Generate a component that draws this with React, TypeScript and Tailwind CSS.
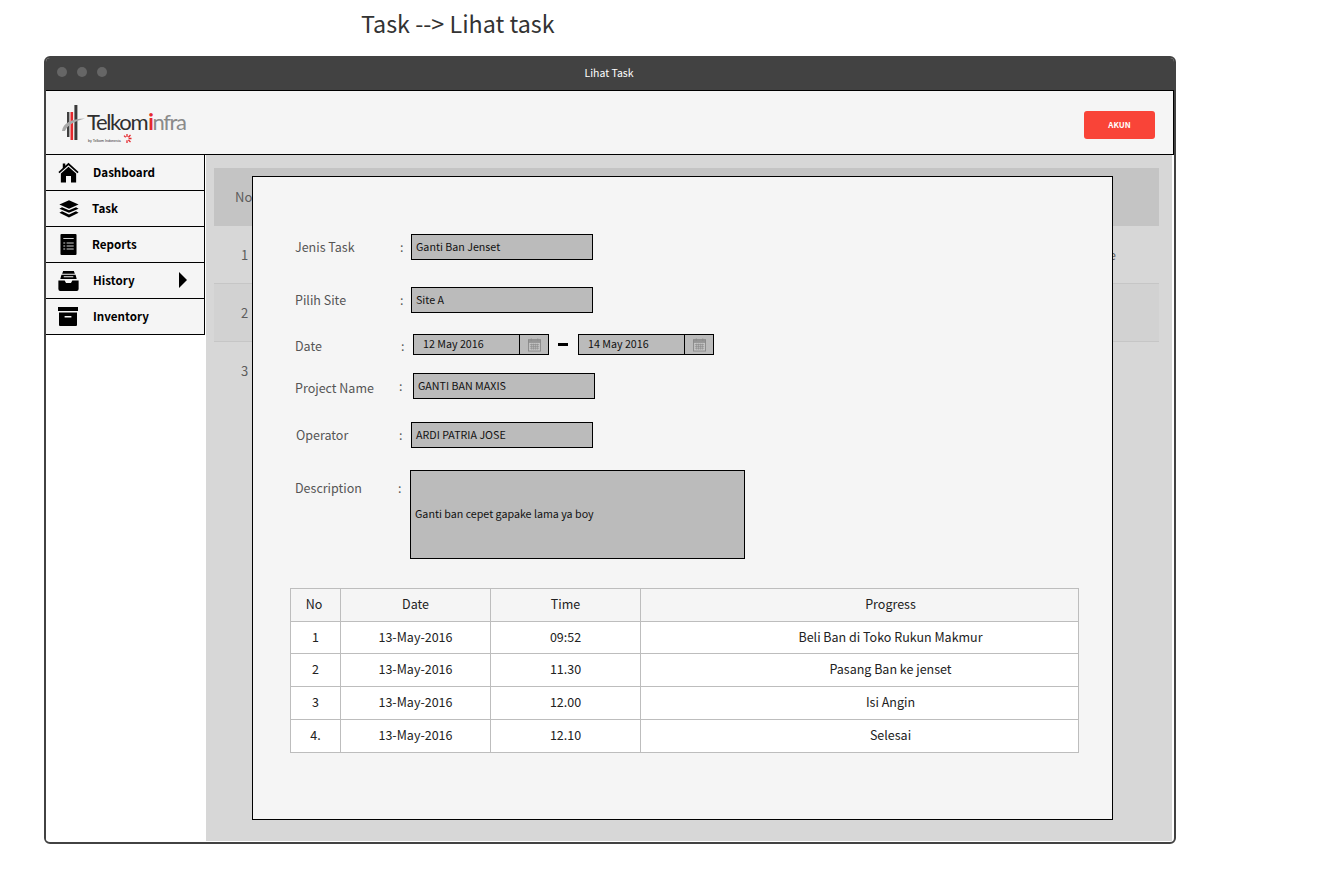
const fontStack = { fontFamily: '"Noto Sans CJK JP", "Noto Sans", sans-serif' };

function HomeIcon() {
  return (
    <svg width="21" height="21" viewBox="0 0 22 22" fill="#000">
      <path d="M11 .8 L21.6 10.6 L20.4 11.9 L11 3.4 L1.6 11.9 L.4 10.6 L5 6.4 V1.6 H7.6 V4 Z" />
      <path d="M11 5 L19 12 V21.4 H13.6 V14.6 H8.4 V21.4 H3 V12 Z" />
    </svg>
  );
}

function LayersIcon() {
  return (
    <svg width="20" height="18" viewBox="0 0 20 20" preserveAspectRatio="none" fill="#000">
      <path d="M10 .4 L19.6 5 L10 9.6 L.4 5 Z" />
      <path d="M3 8 L10 11.4 L17 8 L19.6 9.6 L10 14.2 L.4 9.6 Z" />
      <path d="M3 12.6 L10 16 L17 12.6 L19.6 14.2 L10 19.4 L.4 14.2 Z" />
    </svg>
  );
}

function ReportIcon() {
  return (
    <svg width="17" height="21" viewBox="0 0 18 21" preserveAspectRatio="none">
      <rect x=".5" y="0" width="17" height="21" rx="1" fill="#000" />
      <g fill="#cfcfcf">
        <rect x="3.5" y="4" width="11" height="1" />
        <rect x="3.5" y="8.5" width="2" height="1" />
        <rect x="7" y="8.5" width="7.5" height="1" />
        <rect x="3.5" y="11.5" width="2" height="1" />
        <rect x="7" y="11.5" width="7.5" height="1" />
        <rect x="3.5" y="14.5" width="2" height="1" />
        <rect x="7" y="14.5" width="7.5" height="1" />
      </g>
    </svg>
  );
}

function HistoryIcon() {
  return (
    <svg width="21" height="20" viewBox="0 0 22 21" preserveAspectRatio="none" fill="#000">
      <path d="M5.4 0 H16.6 L17.6 3 H4.4 Z" />
      <path d="M3.6 4 H18.4 L19.6 8.4 H2.4 Z M6 5.4 V6.6 H16 V5.4 Z" fillRule="evenodd" />
      <path d="M.4 10 H7 L8.4 12.6 H13.6 L15 10 H21.6 V19 A2 2 0 0 1 19.6 21 H2.4 A2 2 0 0 1 .4 19 Z" />
    </svg>
  );
}

function ArchiveIcon() {
  return (
    <svg width="20" height="19" viewBox="0 0 20 19" fill="#000">
      <rect x="0" y="0" width="20" height="4" />
      <path d="M1 5.4 H19 V18 A1 1 0 0 1 18 19 H2 A1 1 0 0 1 1 18 Z M6.6 9 V10.6 H13.4 V9 Z" fillRule="evenodd" />
    </svg>
  );
}

function CalendarIcon() {
  return (
    <svg width="13" height="14" viewBox="0 0 14 14" fill="none" stroke="#8a8a8a">
      <rect x=".5" y="1.5" width="13" height="12" fill="#c4c4c4" />
      <rect x=".5" y="1.5" width="13" height="2.5" fill="#9a9a9a" />
      <path d="M3.5 0 V2.5 M10.5 0 V2.5" />
      <path d="M2 6.5 H12 M2 8.5 H12 M2 10.5 H12 M4 5.5 V12 M6 5.5 V12 M8 5.5 V12 M10 5.5 V12" strokeWidth=".7" />
    </svg>
  );
}

function LogoMark() {
  return (
    <svg width="25" height="38" viewBox="0 0 25 38" className="mt-[2px]">
      <rect x="6" y="8" width="2.4" height="25" fill="#3f3f3f" />
      <rect x="9.5" y="8" width="2.6" height="28" fill="#e5282d" />
      <rect x="13.4" y="1" width="3" height="35" fill="#3a3a3a" />
      <path d="M1 27 C2 19 10 15 24 14.5 C15 17 7 20 4 27 Z" fill="#a8a8a8" />
    </svg>
  );
}

function TelkomBurst() {
  return (
    <svg width="11" height="11" viewBox="0 0 11 11" stroke="#e5282d" strokeWidth="1.3" className="-mt-[2px]">
      <path d="M6 1 V4 M9.5 2 L7.4 4.2 M10.5 5.5 H7.6 M9.5 9 L7.4 7 M6 10 V7.2 M3 2.6 L4.7 4.2" />
    </svg>
  );
}

function Logo() {
  return (
    <div className="flex h-[41px] items-start gap-[1px]">
      <LogoMark />
      <div className="flex flex-col pt-[7px]">
        <div className="flex h-[26px] items-center font-['Lato',sans-serif] text-[22px] leading-none tracking-[-1.35px]">
          <span className="text-[#2f2f2f]">Telkom</span>
          <span className="ml-[1px] font-bold text-[#e5282d]">i</span>
          <span className="text-[#8a8a8a]">nfra</span>
        </div>
        <div className="flex items-start pl-[1px]">
          <span className="pt-[3px] font-['Liberation_Sans',sans-serif] text-[3.6px] leading-[6px] text-[#333]">by Telkom Indonesia</span>
          <TelkomBurst />
        </div>
      </div>
    </div>
  );
}

const menu = [
  { label: 'Dashboard', icon: <HomeIcon />, iconBox: 'w-[48px] pl-[13px]', arrow: false },
  { label: 'Task', icon: <LayersIcon />, iconBox: 'w-[47px] pl-[14px]', arrow: false },
  { label: 'Reports', icon: <ReportIcon />, iconBox: 'w-[47px] pl-[15px]', arrow: false },
  { label: 'History', icon: <HistoryIcon />, iconBox: 'w-[48px] pl-[13px]', arrow: true },
  { label: 'Inventory', icon: <ArchiveIcon />, iconBox: 'w-[48px] pl-[13px]', arrow: false },
];

function Sidebar() {
  return (
    <div className="w-[159px] shrink-0 bg-white">
      <div className="-ml-[2px] -mt-[1px] border-t border-l border-black">
        {menu.map((m) => (
          <div key={m.label} className="relative flex h-[36px] items-center border-r border-b border-black bg-[#f5f5f5] text-[11.6px] font-bold text-black">
            <div className={`flex items-center ${m.iconBox}`}>{m.icon}</div>
            <span>{m.label}</span>
            {m.arrow && <span className="absolute left-[134px] top-[9px] h-0 w-0 border-y-[8px] border-l-[8px] border-y-transparent border-l-black" />}
          </div>
        ))}
      </div>
    </div>
  );
}

function BackgroundTable() {
  return (
    <div className="pl-[8px] pr-[13px] pt-[13px] text-[13px] text-[#5c5c5c]">
      <div className="flex h-[58px] items-center bg-[#c4c4c4] pl-[21px]">No</div>
      <div className="flex h-[58px] items-center justify-between border-b border-[#c6c6c6] pl-[27px] pr-[43px]">
        <span>1</span>
        <span>e</span>
      </div>
      <div className="flex h-[58px] items-center border-b border-[#c6c6c6] bg-[#d2d2d2] pl-[27px]">2</div>
      <div className="flex h-[58px] items-center pl-[27px]">3</div>
    </div>
  );
}

function Field({ children, className }: { children: React.ReactNode; className: string }) {
  return <div className={`flex items-center border border-black bg-[#bbbbbb] text-[10.7px] text-[#111] ${className}`}>{children}</div>;
}

function DateField({ value }: { value: string }) {
  return (
    <div className="flex h-[21px] w-[136px] border border-black bg-[#bbbbbb] text-[10.7px] text-[#111]">
      <div className="flex flex-1 items-center pl-[9px]">{value}</div>
      <div className="flex w-[29px] items-center justify-center border-l border-black">
        <CalendarIcon />
      </div>
    </div>
  );
}

const progress = [
  ['1', '13-May-2016', '09:52', 'Beli Ban di Toko Rukun Makmur', 'h-[32px]'],
  ['2', '13-May-2016', '11.30', 'Pasang Ban ke jenset', 'h-[33px]'],
  ['3', '13-May-2016', '12.00', 'Isi Angin', 'h-[33px]'],
  ['4.', '13-May-2016', '12.10', 'Selesai', 'h-[33px]'],
];

function ProgressTable() {
  return (
    <table className="ml-[37px] mt-[29px] w-[789px] table-fixed border-collapse text-center text-[12.5px] text-[#222]">
      <thead>
        <tr className="h-[33px] bg-[#f5f5f5]">
          <th className="w-[50px] border border-[#bdbdbd] pr-[3px] font-normal">No</th>
          <th className="w-[150px] border border-[#bdbdbd] font-normal">Date</th>
          <th className="w-[150px] border border-[#bdbdbd] font-normal">Time</th>
          <th className="border border-[#bdbdbd] pl-[62px] font-normal">Progress</th>
        </tr>
      </thead>
      <tbody>
        {progress.map((r) => (
          <tr key={r[0]} className={`bg-white ${r[4]}`}>
            <td className="border border-[#bdbdbd]">{r[0]}</td>
            <td className="border border-[#bdbdbd]">{r[1]}</td>
            <td className="border border-[#bdbdbd]">{r[2]}</td>
            <td className="border border-[#bdbdbd] pl-[62px]">{r[3]}</td>
          </tr>
        ))}
      </tbody>
    </table>
  );
}

function TaskModal() {
  const label = 'text-[12.5px] text-[#555]';
  return (
    <div className="absolute left-[46px] top-[21px] h-[644px] w-[861px] border border-black bg-[#f5f5f5]">
      <div className="flex items-center pl-[42px] pt-[57px]">
        <span className={`w-[105px] ${label}`}>Jenis Task</span>
        <span className={`w-[11px] ${label}`}>:</span>
        <Field className="h-[26px] w-[182px] pl-[4px]">Ganti Ban Jenset</Field>
      </div>
      <div className="flex items-center pl-[42px] pt-[27px]">
        <span className={`w-[105px] ${label}`}>Pilih Site</span>
        <span className={`w-[11px] ${label}`}>:</span>
        <Field className="h-[26px] w-[182px] pl-[4px]">Site A</Field>
      </div>
      <div className="flex items-start pl-[42px] pt-[21px]">
        <span className={`w-[106px] pt-[3px] ${label}`}>Date</span>
        <span className={`w-[12px] pt-[3px] ${label}`}>:</span>
        <DateField value="12 May 2016" />
        <span className="ml-[9px] mr-[10px] mt-[9px] h-[3px] w-[10px] bg-black" />
        <DateField value="14 May 2016" />
      </div>
      <div className="flex items-center pl-[42px] pt-[17px]">
        <span className={`w-[104px] pt-[6px] ${label}`}>Project Name</span>
        <span className={`w-[14px] pt-[2px] ${label}`}>:</span>
        <Field className="h-[26px] w-[182px] pl-[4px]">GANTI BAN MAXIS</Field>
      </div>
      <div className="flex items-center pl-[43px] pt-[23px]">
        <span className={`w-[103px] pt-[2px] ${label}`}>Operator</span>
        <span className={`w-[12px] pt-[2px] ${label}`}>:</span>
        <Field className="h-[26px] w-[182px] pl-[4px]">ARDI PATRIA JOSE</Field>
      </div>
      <div className="flex items-start pl-[42px] pt-[22px]">
        <span className={`w-[103px] pt-[9px] ${label}`}>Description</span>
        <span className={`w-[12px] pt-[9px] ${label}`}>:</span>
        <Field className="h-[89px] w-[335px] pl-[4px]">Ganti ban cepet gapake lama ya boy</Field>
      </div>
      <ProgressTable />
    </div>
  );
}

export default function App() {
  return (
    <div className="h-[882px] w-full overflow-hidden bg-white" style={fontStack}>
      <div className="flex h-[56px] items-start pl-[361px] pt-[5px] text-[23.3px] leading-[36px] text-[#333]">Task --&gt; Lihat task</div>
      <div className="ml-[44px] flex h-[788px] w-[1132px] flex-col overflow-hidden rounded-[6px] border-2 border-[#424242] bg-white">
        <div className="relative flex h-[32px] shrink-0 items-center justify-center bg-[#424242] pb-[2px] pr-[2px] text-[10.5px] text-white">
          <div className="absolute left-[11px] top-[9px] flex gap-[10px]">
            <span className="h-[10px] w-[10px] rounded-full bg-[#666]" />
            <span className="h-[10px] w-[10px] rounded-full bg-[#666]" />
            <span className="h-[10px] w-[10px] rounded-full bg-[#666]" />
          </div>
          Lihat Task
        </div>
        <div className="flex h-[65px] shrink-0 items-center justify-between border-y border-r border-black bg-[#f5f5f5] pl-[15px] pr-[18px]">
          <Logo />
          <div className="mt-[4px] flex h-[28px] w-[71px] items-center justify-center rounded-[3px] bg-[#f94438] text-[8px] font-bold text-white">AKUN</div>
        </div>
        <div className="flex min-h-0 flex-1 pb-[1px] pr-[2px]">
          <Sidebar />
          <div className="relative ml-[1px] flex-1 bg-[#d7d7d7]">
            <BackgroundTable />
            <TaskModal />
          </div>
        </div>
      </div>
    </div>
  );
}
